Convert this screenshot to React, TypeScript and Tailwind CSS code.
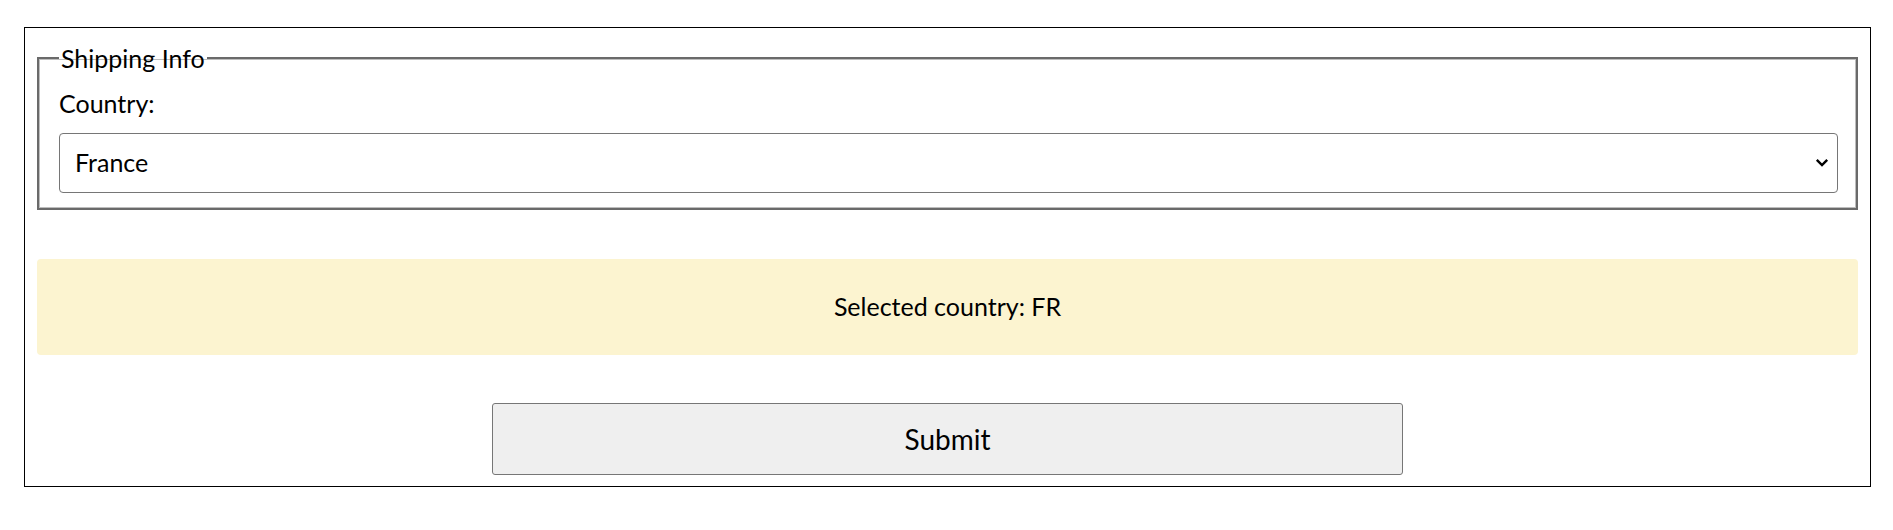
import React, { useState } from "react";

export default function App() {
  const [country, setCountry] = useState("FR");
  return (
    <div className="bg-white min-h-[530px] pt-[27px] pl-[24px] pr-[22px] text-black" style={{ fontFamily: "Lato, 'Noto Sans', sans-serif" }}>
      <div className="border border-black px-[12px] pt-[12px] pb-[11px]">
        <fieldset className="border-2 border-[#6a6a6a] shadow-[inset_0_0_0_1px_#bdbdbd] px-[20px] pr-[18px] pb-[15px] m-0">
          <legend className="px-[2px] text-[25px] leading-[36px]">Shipping Info</legend>
          <label className="block text-[25px] leading-[36px] mt-[9px]">Country:</label>
          <div className="relative mt-[12px]">
            <select
              value={country}
              onChange={(e) => setCountry(e.target.value)}
              className="appearance-none block w-full h-[60px] border border-[#767676] rounded-[4px] bg-white pl-[15px] text-[25px] text-black outline-none"
              style={{ fontFamily: "Lato, 'Noto Sans', sans-serif" }}
            >
              <option value="US">United States</option>
              <option value="FR">France</option>
              <option value="DE">Germany</option>
            </select>
            <svg className="absolute right-[9px] top-[25px] pointer-events-none" width="14" height="9" viewBox="0 0 14 9">
              <path d="M1.8 1.8 L7 7 L12.2 1.8" stroke="#000" strokeWidth="2.4" fill="none" />
            </svg>
          </div>
        </fieldset>
        <div className="mt-[49px] h-[96px] rounded-[4px] bg-[#fcf4d0] flex items-center justify-center text-[25px]">
          Selected country: {country}
        </div>
        <div className="mt-[48px] flex justify-center">
          <button className="w-1/2 h-[72px] bg-[#efefef] border border-[#767676] rounded-[3px] text-[28px]" style={{ fontFamily: "Lato, 'Noto Sans', sans-serif" }}>
            Submit
          </button>
        </div>
      </div>
    </div>
  );
}
